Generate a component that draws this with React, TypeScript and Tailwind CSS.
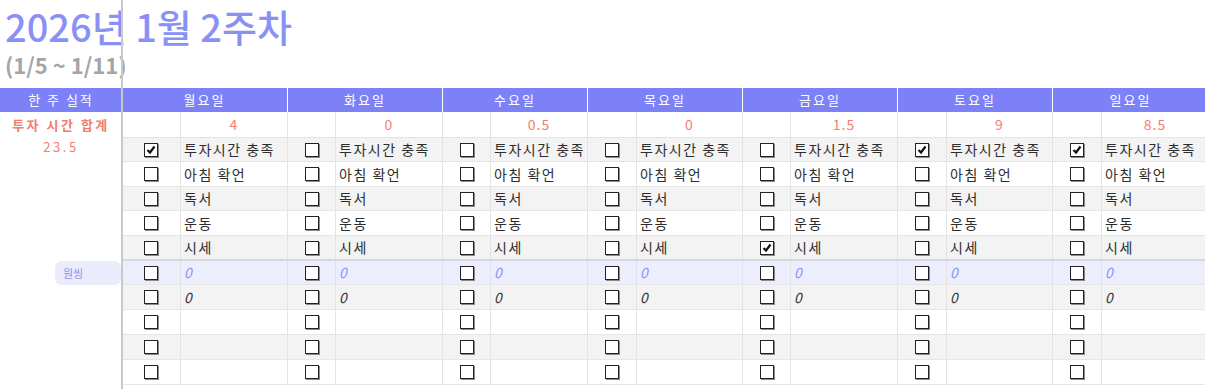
import React from "react";

type Day = {
  name: string;
  total: string;
  span: string;
  cb: string;
  txt: string;
  checks: number[];
};

const days: Day[] = [
  { name: "월요일", total: "4", span: "w-[166px]", cb: "w-[59px]", txt: "w-[107px]", checks: [0] },
  { name: "화요일", total: "0", span: "w-[155px]", cb: "w-[48px]", txt: "w-[107px]", checks: [] },
  { name: "수요일", total: "0.5", span: "w-[145px]", cb: "w-[48px]", txt: "w-[97px]", checks: [] },
  { name: "목요일", total: "0", span: "w-[155px]", cb: "w-[49px]", txt: "w-[106px]", checks: [] },
  { name: "금요일", total: "1.5", span: "w-[155px]", cb: "w-[48px]", txt: "w-[107px]", checks: [4] },
  { name: "토요일", total: "9", span: "w-[155px]", cb: "w-[49px]", txt: "w-[106px]", checks: [0] },
  { name: "일요일", total: "8.5", span: "w-[156px]", cb: "w-[49px]", txt: "w-[107px]", checks: [0] },
];

const items = ["투자시간 충족", "아침 확언", "독서", "운동", "시세", "0", "0", "", "", ""];

// row background + height per item row
const rowStyle = [
  "bg-[#f3f3f3] h-[24px]",
  "bg-white h-[25px]",
  "bg-[#f3f3f3] h-[24px]",
  "bg-white h-[25px]",
  "bg-[#f3f3f3] h-[25px]",
  "bg-[#eceefd] h-[24px]",
  "bg-[#f3f3f3] h-[25px]",
  "bg-white h-[25px]",
  "bg-[#f3f3f3] h-[25px]",
  "bg-white h-[25px]",
];

function Checkbox({ checked }: { checked: boolean }) {
  return (
    <div className="w-[14px] h-[14px] border border-[#222] bg-white shadow-[1px_1px_0_#8a8a8a] flex items-center justify-center">
      {checked && (
        <svg width="12" height="12" viewBox="0 0 12 12">
          <path d="M2.5 6 L5 8.5 L9.5 2.5" fill="none" stroke="#111" strokeWidth="2.2" />
        </svg>
      )}
    </div>
  );
}

export default function App() {
  return (
    <div className="relative w-[1205px] h-[389px] overflow-hidden bg-white font-['Noto_Sans_CJK_KR','Noto_Sans',sans-serif]">
      {/* title */}
      <div className="h-[88px] pl-[5px] pt-[4px]">
        <div className="text-[38px] leading-[44px] font-medium text-[#8a91f6] whitespace-nowrap">2026년 1월 2주차</div>
        <div className="mt-[3px] text-[22px] leading-[27px] font-semibold text-[#a5a5a5] whitespace-nowrap">(1/5 ~ 1/11)</div>
      </div>

      {/* header row */}
      <div className="flex h-[24px] bg-[#7d81f7] text-white text-[13px] tracking-[2px] whitespace-nowrap">
        <div className="w-[122px] shrink-0 flex items-center justify-center">한 주 실적</div>
        {days.map((d) => (
          <div key={d.name} className={`${d.span} shrink-0 border-r border-white flex items-center justify-center`}>
            {d.name}
          </div>
        ))}
      </div>

      {/* totals row */}
      <div className="flex h-[26px] whitespace-nowrap">
        <div className="w-[122px] shrink-0 flex items-center justify-center text-[13px] font-bold tracking-[2.5px] text-[#f57b6c]">
          투자 시간 합계
        </div>
        {days.map((d) => (
          <div key={d.name} className="flex shrink-0 border-b border-[#e3e3e3]">
            <div className={`${d.cb} border-r border-[#e3e3e3]`} />
            <div className={`${d.txt} border-r border-[#e3e3e3] flex items-center justify-center text-[14px] tracking-[1px] text-[#f5806f]`}>
              {d.total}
            </div>
          </div>
        ))}
      </div>

      {/* item rows */}
      {items.map((it, r) => (
        <div key={r} className="flex whitespace-nowrap">
          <div className="w-[122px] shrink-0 flex items-center justify-center bg-white">
            {r === 0 && <span className="text-[13px] tracking-[2.5px] text-[#f57b6c] -mt-[6px]">23.5</span>}
            {r === 5 && (
              <div className="ml-[54px] w-[66px] h-full rounded-[7px] bg-[#eaecfc] flex items-center pl-[8px] text-[11px] text-[#8b93f5]">
                원씽
              </div>
            )}
          </div>
          {days.map((d) => (
            <div
              key={d.name}
              className={`flex shrink-0 ${rowStyle[r]} ${r === 4 ? "border-b-2 border-[#d6d7e2]" : "border-b border-[#e6e6e6]"}`}
            >
              <div className={`${d.cb} border-r border-[#e3e3e3] flex items-center justify-center`}>
                <Checkbox checked={d.checks.includes(r)} />
              </div>
              <div
                className={`${d.txt} border-r border-[#e3e3e3] flex items-center pl-[3px] text-[14px] tracking-[1.5px] ${
                  r === 5 ? "italic text-[#8b93f5]" : r === 6 ? "italic text-[#333]" : "text-[#2d2d2d]"
                }`}
              >
                {it}
              </div>
            </div>
          ))}
        </div>
      ))}

      {/* partly visible row below */}
      <div className="flex h-[25px] text-[14px] text-[#333] whitespace-nowrap pt-[2px]">
        <div className="w-[122px] shrink-0 pl-[40px] text-[#999]">※</div>
        <div className="pl-[45px]">주간 회고 : 이번 주 목표를 모두 달성했는지 확인하고 다음 주 계획을 세운다</div>
      </div>

      {/* frozen pane divider */}
      <div className="absolute left-[121px] top-0 w-[2px] h-full bg-[#c9c9c9]" />
    </div>
  );
}
